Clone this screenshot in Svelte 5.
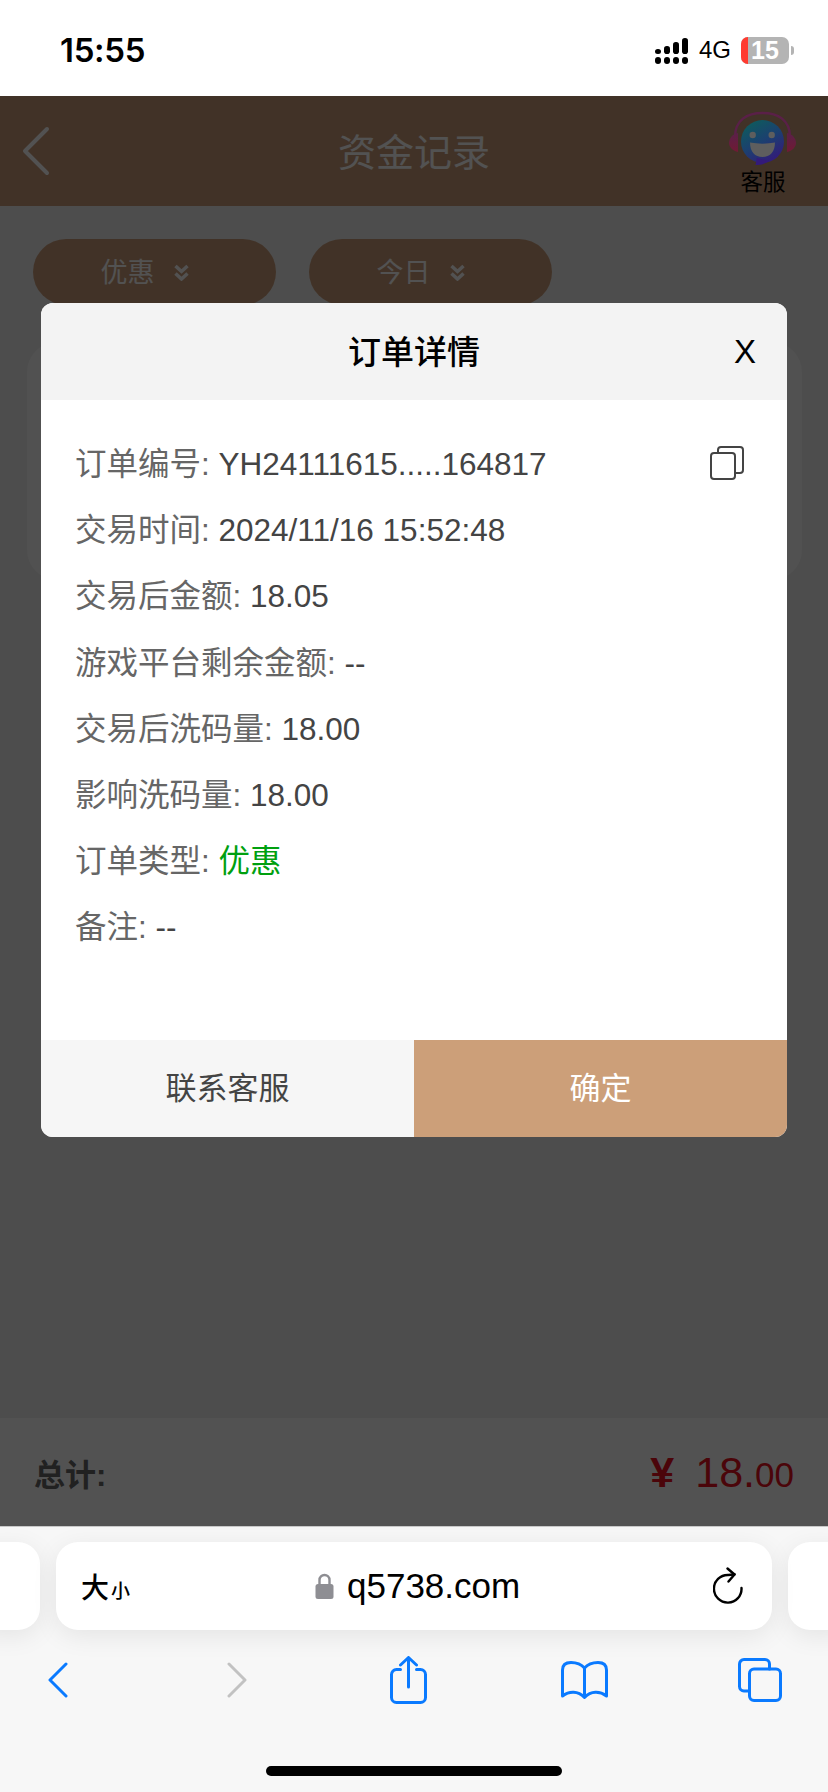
<script lang="ts">
	const rows = [
		{ label: '订单编号', value: 'YH24111615.....164817', copy: true },
		{ label: '交易时间', value: '2024/11/16 15:52:48' },
		{ label: '交易后金额', value: '18.05' },
		{ label: '游戏平台剩余金额', value: '--' },
		{ label: '交易后洗码量', value: '18.00' },
		{ label: '影响洗码量', value: '18.00' },
		{ label: '订单类型', value: '优惠', green: true },
		{ label: '备注', value: '--' }
	];

	const filters = ['优惠', '今日'];

	// signal columns: left edge and top of the upper bar
	const signal = [
		{ x: 0, top: 11 },
		{ x: 9, top: 8 },
		{ x: 18, top: 4 },
		{ x: 27, top: 0 }
	];
</script>

<div class="phone">
	<div class="status">
		<span class="clock">15:55</span>
		<div class="status-right">
			<svg class="signal" width="33" height="26" viewBox="0 0 33 26">
				{#each signal as s}
					<rect x={s.x} y={s.top} width="6" height={16 - s.top} rx="2.800" />
					<rect x={s.x} y="19" width="6" height="7" rx="3" />
				{/each}
			</svg>
			<span class="net">4G</span>
			<div class="battery">
				<div class="battery-body">
					<span class="battery-low"></span>
					<span class="battery-num">15</span>
				</div>
				<span class="battery-nub"></span>
			</div>
		</div>
	</div>

	<div class="web">
		<header class="top">
			<svg class="back" width="30" height="50" viewBox="0 0 30 50">
				<path d="M26 3 L4 25 L26 47" />
			</svg>
			<h1>资金记录</h1>
			<!-- the avatar keeps its own dimmed colours, it sits above the overlay -->
			<div class="service">
				<svg width="72" height="60" viewBox="0 0 72 60">
					<defs>
						<linearGradient id="face" x1="0.1" y1="0" x2="0.7" y2="1">
							<stop offset="0" stop-color="#0c5f5a" />
							<stop offset="0.55" stop-color="#1c3f70" />
							<stop offset="1" stop-color="#331a7a" />
						</linearGradient>
						<linearGradient id="phones" x1="0" y1="0" x2="0" y2="1">
							<stop offset="0" stop-color="#5a2048" />
							<stop offset="1" stop-color="#701a34" />
						</linearGradient>
					</defs>
					<path d="M8 27 C8 10 20 3 35.500 3 C51 3 63 10 63 27" fill="none" stroke="#5a2048" stroke-width="2.500" />
					<path d="M11 23 C6 24 2 28 2 33 C2 37 6 41 11 42 Z" fill="url(#phones)" />
					<path d="M60 23 C65 24 69 28 69 33 C69 37 65 41 60 42 Z" fill="url(#phones)" />
					<circle cx="35.500" cy="31.500" r="21.500" fill="url(#face)" />
					<path d="M30 48 L28.500 55 C33 55 38 54 42 51 Z" fill="#331a7a" />
					<circle cx="25.700" cy="25" r="3.200" fill="#5e5e5e" />
					<circle cx="44.700" cy="25" r="3.200" fill="#5e5e5e" />
					<path d="M23 32.500 C31 34 40 34 48 32.500 C48 42 43 47 35.500 47 C28 47 23 42 23 32.500 Z" fill="#5e5e5e" />
				</svg>
				<span>客服</span>
			</div>
		</header>

		<div class="filters">
			{#each filters as f}
				<div class="pill">
					<span>{f}</span>
					<svg width="15" height="17" viewBox="0 0 15 17">
						<path d="M1.500 2 L7.500 7.500 L13.500 2 M1.500 9.500 L7.500 15 L13.500 9.500" />
					</svg>
				</div>
			{/each}
		</div>

		<div class="card"></div>

		<div class="total">
			<span class="total-label">总计:</span>
			<span class="amount"><span class="yen">¥</span>18.<small>00</small></span>
		</div>

		<div class="overlay">
			<div class="modal">
				<div class="modal-head">
					<span class="modal-title">订单详情</span>
					<span class="modal-close">X</span>
				</div>
				<div class="modal-body">
					{#each rows as row}
						<div class="row">
							<span class="label">{row.label}:</span>
							<span class="value" class:green={row.green}>{row.value}</span>
							{#if row.copy}
								<svg class="copy" width="34" height="34" viewBox="0 0 34 34">
									<rect x="1" y="7" width="24" height="26" rx="3" />
									<path d="M8 7 V4 A3 3 0 0 1 11 1 H30 A3 3 0 0 1 33 4 V24 A3 3 0 0 1 30 27 H25" />
								</svg>
							{/if}
						</div>
					{/each}
				</div>
				<div class="modal-foot">
					<button class="contact">联系客服</button>
					<button class="ok">确定</button>
				</div>
			</div>
		</div>
	</div>

	<div class="browser">
		<div class="tabs">
			<div class="tab-side"></div>
			<div class="url">
				<span class="aa">大<small>小</small></span>
				<div class="addr">
					<svg width="19" height="26" viewBox="0 0 19 26">
						<path d="M4.500 12 V7 A5 5 0 0 1 14.500 7 V12" fill="none" stroke="#8e8e93" stroke-width="2.400" />
						<rect x="0.500" y="11" width="18" height="15" rx="2.500" fill="#8e8e93" />
					</svg>
					<span>q5738.com</span>
				</div>
				<svg class="reload" width="30" height="38" viewBox="0 0 30 38">
					<path d="M28.500 21 A13.800 13.800 0 1 1 15 8 C17 8 19 7.800 21.500 7.300" />
					<path d="M14.500 1.500 L21.500 7.500 L15.500 14.500" />
				</svg>
			</div>
			<div class="tab-side"></div>
		</div>
		<nav class="tools">
			<svg width="20" height="36" viewBox="0 0 20 36"><path class="blue" d="M18 2 L2 18 L18 34" /></svg>
			<svg class="forward" width="20" height="36" viewBox="0 0 20 36"><path class="gray" d="M2 2 L18 18 L2 34" /></svg>
			<svg width="37" height="48" viewBox="0 0 37 48">
				<path class="blue" d="M10.500 13.500 H6.500 A5 5 0 0 0 1.500 18.500 V41.500 A5 5 0 0 0 6.500 46.500 H30.500 A5 5 0 0 0 35.500 41.500 V18.500 A5 5 0 0 0 30.500 13.500 H26.500 M18.500 31 V2 M10.500 9 L18.500 1.500 L26.500 9" />
			</svg>
			<svg width="47" height="38" viewBox="0 0 47 38">
				<path class="blue" d="M23.500 7 C20 3 15 1.500 10 1.500 C4.500 1.500 1.500 4 1.500 9 V35 C8 30 17 29.500 23.500 36.500 C30 29.500 39 30 45.500 35 V9 C45.500 4 42.500 1.500 37 1.500 C32 1.500 27 3 23.500 7 Z M23.500 7 V36" />
			</svg>
			<svg width="44" height="44" viewBox="0 0 44 44">
				<path class="blue" d="M11 33 H6 A4.500 4.500 0 0 1 1.500 28.500 V6 A4.500 4.500 0 0 1 6 1.500 H27 A4.500 4.500 0 0 1 31.500 6 V11" />
				<rect class="blue" x="11.500" y="11" width="31" height="31.500" rx="4.500" />
			</svg>
		</nav>
		<div class="home-wrap"><span class="home"></span></div>
	</div>
</div>

<style>
	:global(body) {
		margin: 0;
	}

	.phone {
		width: 828px;
		height: 1792px;
		display: flex;
		flex-direction: column;
		overflow: hidden;
		font-family: 'Liberation Sans', 'Noto Sans CJK SC', sans-serif;
	}

	/* status bar */
	.status {
		height: 96px;
		flex: none;
		background: #fff;
		display: flex;
		justify-content: space-between;
		align-items: flex-start;
		padding: 30px 34px 0 60px;
		box-sizing: border-box;
	}

	.clock {
		font-size: 33px;
		line-height: 40px;
		font-weight: 600;
		font-family: 'Inter', sans-serif;
		letter-spacing: -0.300px;
		color: #000;
	}

	.status-right {
		display: flex;
		align-items: center;
		height: 28px;
		margin-top: 6px;
	}

	.signal {
		fill: #000;
		margin-top: 1px;
	}

	.net {
		font-size: 24px;
		margin-left: 11px;
		color: #000;
	}

	.battery {
		display: flex;
		align-items: center;
		margin-left: 10px;
	}

	.battery-body {
		width: 48px;
		height: 27px;
		background: #b4b4b4;
		border-radius: 7px;
		overflow: hidden;
		display: flex;
		align-items: center;
	}

	.battery-low {
		width: 7px;
		height: 100%;
		background: #ff3b30;
	}

	.battery-num {
		color: #fff;
		font-size: 25px;
		font-weight: 700;
		margin-left: 3px;
		line-height: 27px;
	}

	.battery-nub {
		width: 3px;
		height: 9px;
		margin-left: 2px;
		background: #b4b4b4;
		border-radius: 0 3px 3px 0;
	}

	/* page under the dialog */
	.web {
		flex: 1;
		position: relative;
		display: flex;
		flex-direction: column;
		background: #efefef;
	}

	.top {
		height: 110px;
		flex: none;
		background: #cb9d7a;
		display: flex;
		align-items: center;
		justify-content: space-between;
		padding: 0 29px 0 21px;
		position: relative;
	}

	.back path {
		fill: none;
		stroke: #fff;
		stroke-width: 4;
		stroke-linecap: round;
		stroke-linejoin: round;
	}

	.top h1 {
		margin: -4px 0 0;
		font-size: 38px;
		font-weight: 400;
		color: #fff;
		position: absolute;
		left: 0;
		right: 0;
		text-align: center;
	}

	.service {
		display: flex;
		flex-direction: column;
		align-items: center;
		align-self: flex-start;
		margin-top: 14px;
		position: relative;
		z-index: 2;
	}

	.service svg {
		display: block;
	}

	.service span {
		font-size: 22.500px;
		line-height: 26px;
		color: #000;
	}

	.filters {
		display: flex;
		gap: 33px;
		padding: 33px 33px 0;
	}

	.pill {
		width: 243px;
		height: 66px;
		border-radius: 33px;
		background: #cb9d7a;
		display: flex;
		align-items: center;
		justify-content: center;
		gap: 19px;
		padding-right: 20px;
		box-sizing: border-box;
		color: #fff;
		font-size: 27px;
	}

	.pill span {
		margin-top: -4px;
	}

	.pill svg path {
		fill: none;
		stroke: #fff;
		stroke-width: 3.500;
	}

	.card {
		margin: 37px 26px 0 27px;
		height: 238px;
		background: #fafafa;
		border-radius: 30px;
	}

	.total {
		margin-top: auto;
		height: 108px;
		background: #fff;
		display: flex;
		align-items: center;
		justify-content: space-between;
		padding: 0 34px;
		box-sizing: border-box;
	}

	.total-label {
		font-size: 31px;
		font-weight: 700;
		color: #666;
	}

	.amount {
		font-size: 43px;
		color: #e81020;
	}

	.amount small {
		font-size: 35px;
	}

	.yen {
		margin-right: 21px;
		font-weight: 700;
	}

	/* dialog */
	.overlay {
		position: absolute;
		inset: 0;
		background: rgba(0, 0, 0, 0.68);
		padding: 207px 41px 0;
		box-sizing: border-box;
	}

	.modal {
		height: 834px;
		border-radius: 12px;
		overflow: hidden;
		background: #fff;
		display: flex;
		flex-direction: column;
	}

	.modal-head {
		height: 97px;
		flex: none;
		background: #f3f3f3;
		display: flex;
		align-items: center;
		justify-content: center;
		position: relative;
		color: #000;
	}

	.modal-title {
		font-size: 33px;
		font-weight: 500;
		margin-top: -4px;
	}

	.modal-close {
		position: absolute;
		right: 31px;
		font-size: 33px;
	}

	.modal-body {
		flex: 1;
		padding: 31px 34px 0;
	}

	.row {
		height: 66.200px;
		line-height: 66px;
		font-size: 31.500px;
		position: relative;
	}

	.label {
		color: #666;
	}

	.value {
		color: #444;
	}

	.value.green {
		color: #00a00f;
	}

	.copy {
		position: absolute;
		right: 9px;
		top: 15px;
		fill: none;
		stroke: #444;
		stroke-width: 2;
	}

	.modal-foot {
		height: 97px;
		flex: none;
		display: flex;
	}

	.modal-foot button {
		border: 0;
		padding: 0 0 6px;
		font: inherit;
		font-size: 31px;
	}

	.contact {
		width: 373px;
		background: #f6f6f6;
		color: #444;
	}

	.ok {
		flex: 1;
		background: #cc9f79;
		color: #fff;
	}

	/* browser chrome */
	.browser {
		height: 266px;
		flex: none;
		background: #f7f7f7;
		border-top: 1px solid #c8c8c8;
		box-sizing: border-box;
		display: flex;
		flex-direction: column;
	}

	.tabs {
		display: flex;
		gap: 16px;
		margin: 15px 0 0 -24px;
		height: 88px;
		width: 876px;
		flex: none;
	}

	.tabs > div {
		background: #fff;
		border-radius: 22px;
		box-shadow: 0 6px 26px rgba(0, 0, 0, 0.08);
	}

	.tab-side {
		width: 64px;
		flex: none;
	}

	.url {
		flex: 1;
		display: flex;
		align-items: center;
		justify-content: space-between;
		padding: 0 29px 0 25px;
		position: relative;
	}

	.aa {
		font-size: 28px;
		font-weight: 500;
		color: #000;
	}

	.aa small {
		font-size: 19px;
		margin-left: 2px;
	}

	.addr {
		position: absolute;
		left: 259px;
		display: flex;
		align-items: center;
		gap: 13px;
		font-size: 35px;
		color: #000;
	}

	.reload path {
		fill: none;
		stroke: #000;
		stroke-width: 2.400;
		stroke-linecap: round;
		stroke-linejoin: round;
	}

	.tools {
		display: grid;
		grid-template-columns: repeat(5, 175.500px);
		justify-items: center;
		align-items: center;
		height: 72px;
		flex: none;
		margin: 14px 0 0 -30px;
	}

	.forward {
		margin-left: 8px;
	}

	.tools path,
	.tools rect {
		fill: none;
		stroke-width: 3;
		stroke-linecap: round;
		stroke-linejoin: round;
	}

	.blue {
		stroke: #0a7aff;
	}

	.gray {
		stroke: #c2c2c2;
	}

	.home-wrap {
		flex: 1;
		display: flex;
		justify-content: center;
		padding-top: 50px;
	}

	.home {
		width: 296px;
		height: 10px;
		border-radius: 5px;
		background: #000;
	}
</style>
